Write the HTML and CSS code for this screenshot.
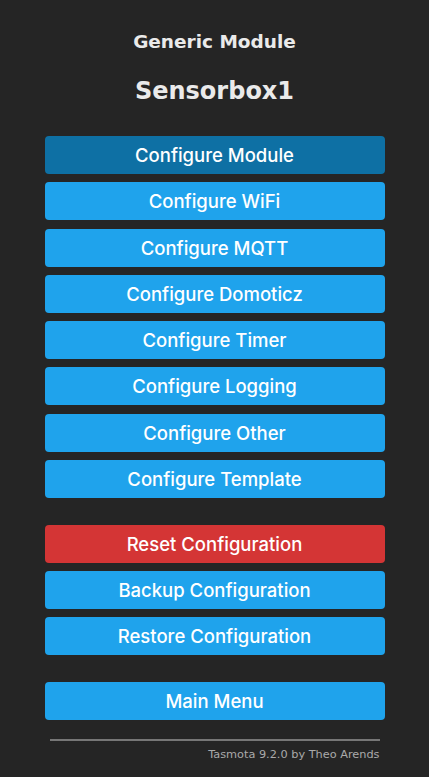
FILE: index.html
```html
<!DOCTYPE html>
<html>
<head>
<meta charset="utf-8">
<link rel="stylesheet" href="styles.css">
</head>
<body>
<div class="page">
  <header class="head">
    <h3 class="module">Generic Module</h3>
    <h2 class="device">Sensorbox1</h2>
  </header>
  <div class="group">
    <button class="btn active">Configure Module</button>
    <button class="btn">Configure WiFi</button>
    <button class="btn">Configure MQTT</button>
    <button class="btn">Configure Domoticz</button>
    <button class="btn">Configure Timer</button>
    <button class="btn">Configure Logging</button>
    <button class="btn">Configure Other</button>
    <button class="btn">Configure Template</button>
  </div>
  <div class="group">
    <button class="btn danger">Reset Configuration</button>
    <button class="btn">Backup Configuration</button>
    <button class="btn">Restore Configuration</button>
  </div>
  <div class="group">
    <button class="btn">Main Menu</button>
  </div>
  <footer class="foot">
    <div class="rule"></div>
    <div class="credit">Tasmota 9.2.0 by Theo Arends</div>
  </footer>
</div>
</body>
</html>
```

FILE: styles.css
```css
html, body {
  margin: 0;
  padding: 0;
  background: #252525;
  color: #eaeaea;
  font-family: "DejaVu Sans", Verdana, sans-serif;
}
.page {
  width: 340px;
  margin: 0 auto;
  display: flex;
  flex-direction: column;
}
.head {
  display: flex;
  flex-direction: column;
  align-items: center;
  padding-top: 30px;
}
.module {
  margin: 0;
  font-size: 18.5px;
  font-weight: bold;
  line-height: 24px;
}
.device {
  margin: 22px 0 0 0;
  font-size: 24px;
  font-weight: bold;
  line-height: 30px;
}
.group {
  display: flex;
  flex-direction: column;
  gap: 8.3px;
  margin-top: 26.5px;
}
.head + .group {
  margin-top: 30px;
}
.btn {
  height: 38px;
  border: 0;
  border-radius: 4px;
  background: #1fa3ec;
  color: #fff;
  font-family: Inter, "Liberation Sans", Arial, sans-serif;
  font-weight: 500;
  font-size: 18.5px;
  padding: 0;
}
.btn.active {
  background: #0e70a4;
}
.btn.danger {
  background: #d43535;
}
.foot {
  padding: 19px 5px 0 5px;
  display: flex;
  flex-direction: column;
}
.rule {
  height: 2px;
  background: #777;
}
.credit {
  text-align: right;
  font-size: 11.3px;
  color: #aaa;
  margin-top: 7px;
}
```
